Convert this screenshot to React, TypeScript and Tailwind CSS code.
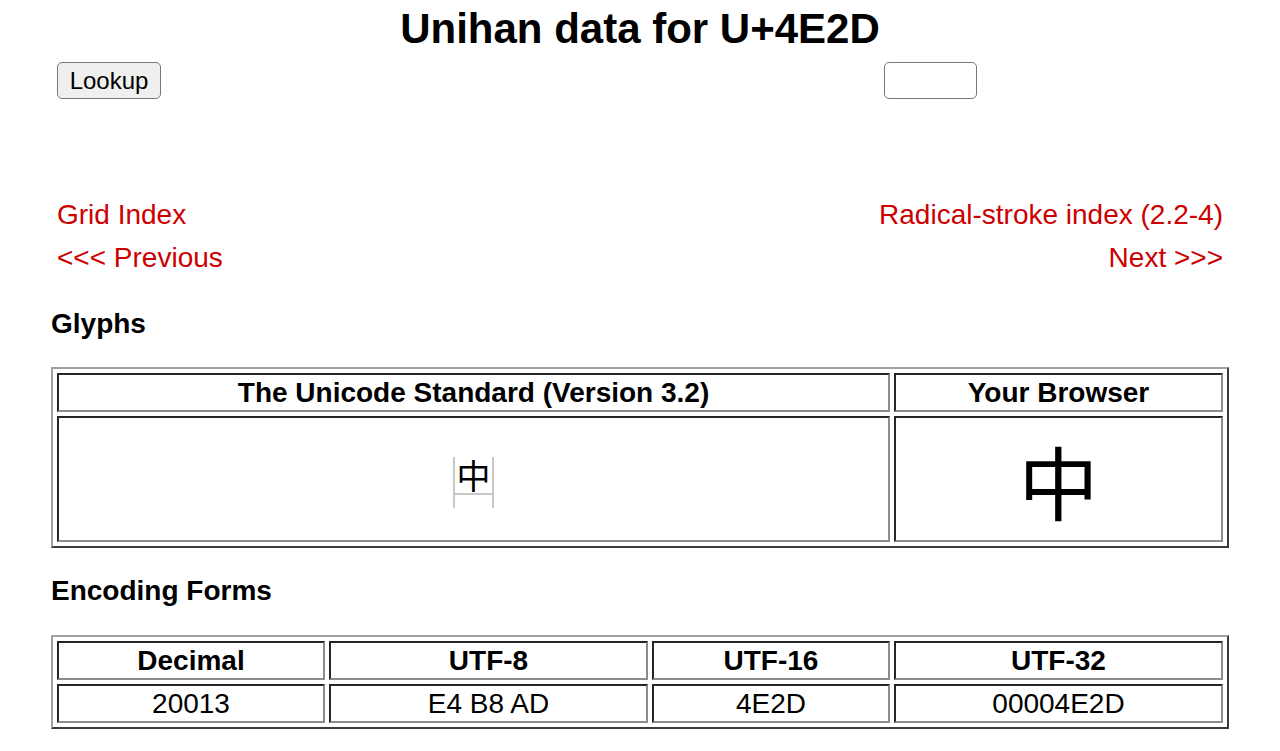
import React from 'react';

const cell =
  'p-0 border-2 border-t-[#262626] border-l-[#262626] border-b-[#8c8c8c] border-r-[#8c8c8c] text-center align-middle';

const tableCls =
  'w-full border-separate border-spacing-[4px] border-2 border-t-[#a0a0a0] border-l-[#a0a0a0] border-b-[#3a3a3a] border-r-[#3a3a3a]';

const encoding = [
  { label: 'Decimal', value: '20013', w: 'w-[268px]' },
  { label: 'UTF-8', value: 'E4 B8 AD', w: 'w-[319px]' },
  { label: 'UTF-16', value: '4E2D', w: 'w-[238px]' },
  { label: 'UTF-32', value: '00004E2D', w: 'w-[329px]' },
];

const App: React.FC = () => {
  return (
    <div className="min-h-[751px] bg-white text-black px-[51px] font-['Liberation_Sans',Arial,sans-serif]">
      {/* Title */}
      <h1 className="pt-[5px] text-center text-[42px] font-bold leading-[48px]">
        Unihan data for U+4E2D
      </h1>

      {/* Lookup form */}
      <div className="mt-[9px] flex items-center justify-between">
        <button className="ml-[6px] h-[37px] w-[104px] rounded-[5px] border border-[#767676] bg-[#efefef] text-[24px] leading-none text-black">
          Lookup
        </button>
        <input
          type="text"
          className="mr-[252px] h-[37px] w-[93px] rounded-[5px] border border-[#767676] bg-white px-2 text-[24px] outline-none"
        />
      </div>

      {/* Navigation */}
      <div className="mt-[94px] text-[28px] leading-[33px] text-[#cc0000]">
        <div className="flex justify-between px-[6px] py-[5px]">
          <a href="#">Grid Index</a>
          <a href="#">Radical-stroke index (2.2-4)</a>
        </div>
        <div className="flex justify-between px-[6px] py-[5px]">
          <a href="#">&lt;&lt;&lt; Previous</a>
          <a href="#">Next &gt;&gt;&gt;</a>
        </div>
      </div>

      {/* Glyphs */}
      <h3 className="mt-[29px] text-[28px] font-bold leading-[32px]">Glyphs</h3>
      <table className={`mt-[27px] ${tableCls}`}>
        <tbody>
          <tr>
            <th className={`${cell} w-[833px]`}>
              <div className="flex h-[35px] items-center justify-center text-[28px] font-bold leading-[32px]">
                The Unicode Standard (Version 3.2)
              </div>
            </th>
            <th className={`${cell} w-[329px]`}>
              <div className="flex h-[35px] items-center justify-center text-[28px] font-bold leading-[32px]">
                Your Browser
              </div>
            </th>
          </tr>
          <tr>
            <td className={cell}>
              <div className="flex h-[122px] items-center justify-center pt-[7px]">
                <div className="w-[41px] h-[51px] border-x-2 border-[#c8c8c8]">
                  <div className="flex h-[38px] items-center justify-center border-b-2 border-[#c8c8c8] text-[34px] leading-none font-['Noto_Sans_CJK_SC',sans-serif]">
                    中
                  </div>
                </div>
              </div>
            </td>
            <td className={cell}>
              <div className="flex h-[122px] items-center justify-center text-[80px] leading-none font-['Noto_Sans_CJK_SC',sans-serif]">
                中
              </div>
            </td>
          </tr>
        </tbody>
      </table>

      {/* Encoding forms */}
      <h3 className="mt-[27px] text-[28px] font-bold leading-[32px]">Encoding Forms</h3>
      <table className={`mt-[28px] ${tableCls}`}>
        <tbody>
          <tr>
            {encoding.map((e) => (
              <th key={e.label} className={`${cell} ${e.w}`}>
                <div className="flex h-[35px] items-center justify-center text-[28px] font-bold leading-[32px]">
                  {e.label}
                </div>
              </th>
            ))}
          </tr>
          <tr>
            {encoding.map((e) => (
              <td key={e.label} className={cell}>
                <div className="flex h-[35px] items-center justify-center text-[28px] leading-[32px]">
                  {e.value}
                </div>
              </td>
            ))}
          </tr>
        </tbody>
      </table>
    </div>
  );
};

export default App;
